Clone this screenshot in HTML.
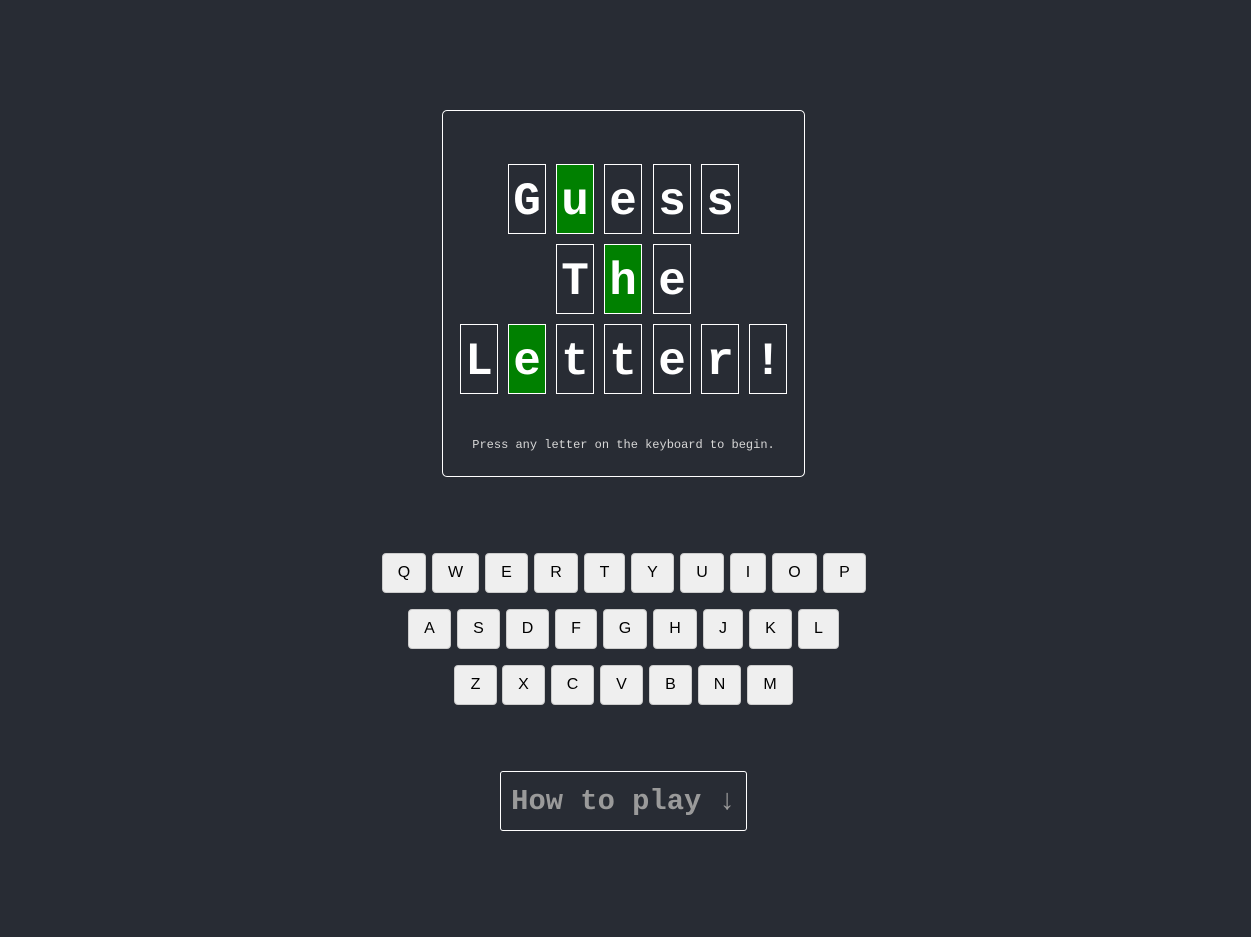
<!DOCTYPE html>
<html><head><style>
body{margin:0;background:#282c34;width:1251px;height:937px;position:relative;overflow:hidden;font-family:"Liberation Mono",monospace}
.box{position:absolute;left:442px;top:110px;width:361px;height:365px;border:1px solid #fff;border-radius:5px}
.t{position:absolute;width:36px;height:68px;border:1px solid #fff;color:#fff;font-weight:bold;font-size:46px;line-height:74px;text-align:center;overflow:hidden}
.g{background:#008000}
.msg{position:absolute;left:442px;width:363px;top:438px;text-align:center;color:#d6d6d6;font-size:12px}
.k{position:absolute;height:38px;background:#efefef;border:1px solid #ccc;border-radius:4px;font-family:"Liberation Sans",sans-serif;font-size:16px;line-height:38px;text-align:center;color:#000}
.how{position:absolute;left:500px;top:771px;width:245px;height:58px;border:1px solid #fff;border-radius:3px;color:#9a9a9a;font-weight:bold;font-size:28.8px;line-height:60px;text-align:center}
</style></head><body>
<div class="box"></div>
<div class="t" style="left:508px;top:164px">G</div>
<div class="t g" style="left:556px;top:164px">u</div>
<div class="t" style="left:604px;top:164px">e</div>
<div class="t" style="left:653px;top:164px">s</div>
<div class="t" style="left:701px;top:164px">s</div>
<div class="t" style="left:556px;top:244px">T</div>
<div class="t g" style="left:604px;top:244px">h</div>
<div class="t" style="left:653px;top:244px">e</div>
<div class="t" style="left:460px;top:324px">L</div>
<div class="t g" style="left:508px;top:324px">e</div>
<div class="t" style="left:556px;top:324px">t</div>
<div class="t" style="left:604px;top:324px">t</div>
<div class="t" style="left:653px;top:324px">e</div>
<div class="t" style="left:701px;top:324px">r</div>
<div class="t" style="left:749px;top:324px">!</div>
<div class="msg">Press any letter on the keyboard to begin.</div>

<div class="k" style="left:382px;top:553px;width:42px">Q</div>
<div class="k" style="left:432px;top:553px;width:45px">W</div>
<div class="k" style="left:485px;top:553px;width:41px">E</div>
<div class="k" style="left:534px;top:553px;width:42px">R</div>
<div class="k" style="left:584px;top:553px;width:39px">T</div>
<div class="k" style="left:631px;top:553px;width:41px">Y</div>
<div class="k" style="left:680px;top:553px;width:42px">U</div>
<div class="k" style="left:730px;top:553px;width:34px">I</div>
<div class="k" style="left:772px;top:553px;width:43px">O</div>
<div class="k" style="left:823px;top:553px;width:41px">P</div>

<div class="k" style="left:408px;top:609px;width:41px">A</div>
<div class="k" style="left:457px;top:609px;width:41px">S</div>
<div class="k" style="left:506px;top:609px;width:41px">D</div>
<div class="k" style="left:555px;top:609px;width:40px">F</div>
<div class="k" style="left:603px;top:609px;width:42px">G</div>
<div class="k" style="left:653px;top:609px;width:42px">H</div>
<div class="k" style="left:703px;top:609px;width:38px">J</div>
<div class="k" style="left:749px;top:609px;width:41px">K</div>
<div class="k" style="left:798px;top:609px;width:39px">L</div>

<div class="k" style="left:454px;top:665px;width:41px">Z</div>
<div class="k" style="left:502px;top:665px;width:41px">X</div>
<div class="k" style="left:551px;top:665px;width:41px">C</div>
<div class="k" style="left:600px;top:665px;width:41px">V</div>
<div class="k" style="left:649px;top:665px;width:41px">B</div>
<div class="k" style="left:698px;top:665px;width:41px">N</div>
<div class="k" style="left:747px;top:665px;width:44px">M</div>

<div class="how">How to play ↓</div>
</body></html>
